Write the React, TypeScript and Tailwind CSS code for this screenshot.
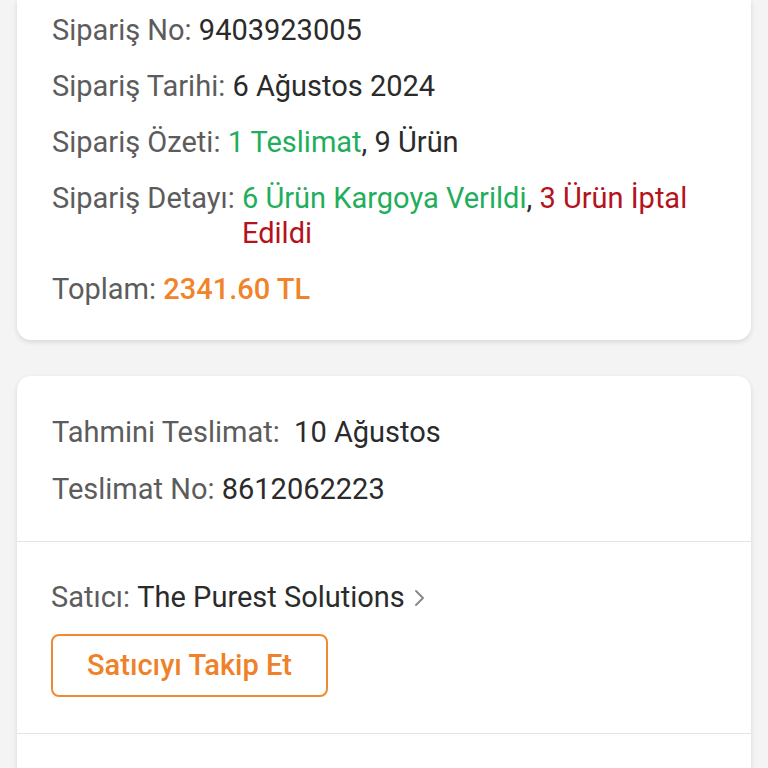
import React from 'react';

const Row: React.FC<{ label: string; children: React.ReactNode }> = ({ label, children }) => (
  <div className="flex items-start">
    <span className="text-[#5c5c5c] whitespace-nowrap">{label}&nbsp;</span>
    <span className="text-[#2b2b2b]">{children}</span>
  </div>
);

const App: React.FC = () => {
  return (
    <div
      className="min-h-[768px] bg-[#f4f4f4] px-[17px] text-[29px] leading-[35px] overflow-hidden"
      style={{ fontFamily: 'Roboto, "Noto Sans", sans-serif' }}
    >
      <div className="bg-white rounded-b-[14px] shadow-[0_2px_5px_rgba(0,0,0,0.12)] pl-[35px] pr-[30px] pt-[13px] pb-[33px] flex flex-col gap-[21px]">
        <Row label="Sipariş No:">9403923005</Row>
        <Row label="Sipariş Tarihi:">6 Ağustos 2024</Row>
        <Row label="Sipariş Özeti:">
          <span className="text-[#1fae5b]">1 Teslimat</span>, 9 Ürün
        </Row>
        <Row label="Sipariş Detayı:">
          <span className="text-[#1fae5b]">6 Ürün Kargoya Verildi</span>,{' '}
          <span className="text-[#b5121b]">3 Ürün İptal Edildi</span>
        </Row>
        <Row label="Toplam:">
          <span className="text-[#f0842a] font-medium">2341.60 TL</span>
        </Row>
      </div>

      <div className="mt-[36px] bg-white rounded-t-[14px] shadow-[0_2px_5px_rgba(0,0,0,0.12)]">
        <div className="pl-[35px] pt-[39px] pb-[34px] flex flex-col gap-[22px]">
          <Row label="Tahmini Teslimat:">&nbsp;10 Ağustos</Row>
          <Row label="Teslimat No:">8612062223</Row>
        </div>
        <div className="border-t border-[#e4e4e4]" />
        <div className="pl-[34px] pt-[38px] pb-[36px]">
          <div className="flex items-center">
            <span className="text-[#5c5c5c]">Satıcı:&nbsp;</span>
            <span className="text-[#2b2b2b]">The Purest Solutions</span>
            <svg
              className="ml-[7px]"
              width="14"
              height="22"
              viewBox="0 0 14 22"
              fill="none"
              stroke="#8a8a8a"
              strokeWidth="2"
              strokeLinecap="round"
              strokeLinejoin="round"
            >
              <path d="M4 4l7 7-7 7" />
            </svg>
          </div>
          <button className="mt-[19px] w-[277px] h-[63px] border-2 border-[#ef8a33] rounded-[8px] text-[#ef8128] font-medium flex items-center justify-center">
            Satıcıyı Takip Et
          </button>
        </div>
        <div className="border-t border-[#e4e4e4] h-[40px]" />
      </div>
    </div>
  );
};

export default App;
